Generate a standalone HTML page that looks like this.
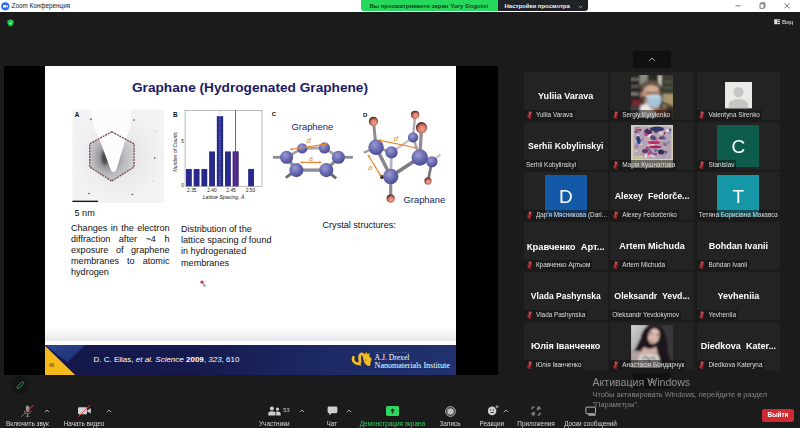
<!DOCTYPE html>
<html><head><meta charset="utf-8">
<style>
*{margin:0;padding:0;box-sizing:border-box}
html,body{width:800px;height:428px;overflow:hidden;background:#1b1b1b;font-family:"Liberation Sans",sans-serif;}
#all{position:absolute;left:0;top:0;width:800px;height:428px;overflow:hidden;filter:blur(.35px)}
.a{position:absolute}
.t{position:absolute;white-space:nowrap;line-height:1}
#titlebar{left:0;top:0;width:800px;height:12px;background:#fff}
#stage{left:4px;top:66px;width:493.5px;height:309px;background:#000}
#slide{left:44.5px;top:66px;width:411.5px;height:309px;background:#fff;overflow:hidden}
#pg{position:absolute;left:-44.5px;top:-66px;width:800px;height:428px}
.tile{position:absolute;width:83.5px;height:47.5px;background:#232323;overflow:hidden}
.big{position:absolute;left:-10px;right:-10px;text-align:center;color:#fff;font-weight:bold;font-size:9.05px;white-space:nowrap;line-height:1;top:19.8px}
.lab{position:absolute;left:0;bottom:0;height:9.3px;background:rgba(18,18,18,.55);color:#dedede;font-size:6.4px;line-height:9.6px;white-space:nowrap;padding:0 2px 0 2px}
.lab.m{padding-left:11.9px}
.mic{position:absolute;left:2.9px;top:.6px;width:5.6px;height:7.8px}
.tb{position:absolute;color:#d6d6d6;font-size:6.4px;white-space:nowrap;line-height:1;top:420.6px;transform:translateX(-50%)}
svg text{font-family:"Liberation Sans",sans-serif}
</style></head><body><div id="all">
<div class="a" id="titlebar">
<svg class="a" style="left:1px;top:2px" width="9" height="9" viewBox="0 0 9 9"><circle cx="4.3" cy="4.3" r="4.1" fill="#2d6df6"/><rect x="2" y="3.1" width="3.2" height="2.5" rx=".6" fill="#fff"/><path d="M5.4 4 L6.9 3.1 V5.6 L5.4 4.7Z" fill="#fff"/></svg>
<div class="t" style="left:11.5px;top:2.9px;font-size:6.35px;color:#222">Zoom Конференция</div>
<svg class="a" style="left:730px;top:0" width="70" height="12" viewBox="0 0 70 12"><path d="M5.5 5.8H10.5" stroke="#444" stroke-width=".7" fill="none"/><rect x="30" y="3.8" width="4" height="4.4" fill="none" stroke="#444" stroke-width=".7"/><path d="M31 3.8V2.8H35V7.2H34" fill="none" stroke="#444" stroke-width=".7"/><path d="M54.5 3.3L59.5 8.3M59.5 3.3L54.5 8.3" stroke="#333" stroke-width=".7" fill="none"/></svg>
</div>
<div class="a" style="left:361px;top:0;width:137px;height:11px;background:#24d95b;border-radius:0 0 0 3px"></div>
<div class="t" style="left:369.5px;top:3.2px;font-size:6.05px;font-weight:bold;color:#14401f">Вы просматриваете экран Yury Gogotsi</div>
<div class="a" style="left:497.5px;top:0;width:90.5px;height:11px;background:#1f2226;border-radius:0 0 3px 0"></div>
<div class="t" style="left:504.5px;top:3.2px;font-size:6px;font-weight:bold;color:#f2f2f2">Настройки просмотра</div>
<svg class="a" style="left:577.5px;top:4.5px" width="5" height="4" viewBox="0 0 5 4"><path d="M.8 1L2.5 2.7 4.2 1" stroke="#ddd" stroke-width=".7" fill="none"/></svg>
<svg class="a" style="left:7px;top:18.7px" width="7" height="7.9" viewBox="0 0 8 9"><path d="M4 .3L7.5 1.6V4.5C7.5 6.6 5.8 8 4 8.7 2.2 8 .5 6.6 .5 4.5V1.6Z" fill="#27c24c"/><path d="M2.4 4.4L3.6 5.6 5.7 3.2" stroke="#fff" stroke-width=".9" fill="none"/></svg>
<svg class="a" style="left:774px;top:19px" width="6.6" height="5.6" viewBox="0 0 7 6"><rect x=".2" y=".2" width="3.6" height="5.4" fill="#ddd"/><rect x="4.4" y=".2" width="2" height="1.3" fill="#ddd"/><rect x="4.4" y="2.2" width="2" height="1.3" fill="#ddd"/><rect x="4.4" y="4.3" width="2" height="1.3" fill="#ddd"/></svg>
<div class="t" style="left:782px;top:18.8px;font-size:6.2px;color:#e6e6e6">Вид</div>
<div class="a" style="left:633px;top:51px;width:38px;height:17px;background:#101010;border-radius:1.5px"></div>
<svg class="a" style="left:648px;top:57px" width="8" height="5" viewBox="0 0 8 5"><path d="M.8 4L4 1 7.2 4" stroke="#bbb" stroke-width=".9" fill="none"/></svg>
<div class="a" id="stage"></div>
<div class="a" id="slide"><div id="pg">
<div class="a" style="left:44.5px;top:328px;width:412px;height:17px;background:linear-gradient(#fff,#e9e9ec 75%,#fff 80%)"></div>
<div class="a" style="left:44.5px;top:345px;width:412px;height:30px;background:linear-gradient(90deg,#15184b,#15194d 35%,#1c2862 65%,#21326f)"></div>
<svg class="a" style="left:44.5px;top:345px" width="60" height="30" viewBox="0 0 60 30"><defs><linearGradient id="fg" x1="0" y1="0" x2="1" y2="1"><stop offset="0" stop-color="#2c4790"/><stop offset="1" stop-color="#1d2c6a"/></linearGradient></defs><path d="M0 0H40L22.5 17.5Z" fill="url(#fg)"/><path d="M0 .8L30.2 30H0Z" fill="#f6b91c"/></svg>
<div class="t" style="left:49px;top:363.6px;font-size:4.7px;color:#3a3020">46</div>
<div class="t" style="left:93.5px;top:355.7px;font-size:8px;color:#fff">D. C. Elias, <i>et al. Science</i> <b>2009</b>, <i>323</i>, 610</div>
<div class="t" style="left:44px;width:412px;text-align:center;top:81.2px;font-size:13.66px;font-weight:bold;color:#1a1a66">Graphane (Hydrogenated Graphene)</div>
<svg class="a" style="left:0;top:0" width="800" height="428" viewBox="0 0 800 428">
<defs><radialGradient id="gA" cx="42%" cy="52%" r="58%"><stop offset="0" stop-color="#4a4a50"/><stop offset=".3" stop-color="#909096"/><stop offset=".6" stop-color="#b8b8bd"/><stop offset="1" stop-color="#d2d2d6"/></radialGradient><radialGradient id="gA2" cx="50%" cy="50%" r="50%"><stop offset="0" stop-color="#e2e2e5"/><stop offset="1" stop-color="#f3f3f5"/></radialGradient><filter id="b1" x="-20%" y="-20%" width="140%" height="140%"><feGaussianBlur stdDeviation="1.2"/></filter><filter id="b05" x="-20%" y="-20%" width="140%" height="140%"><feGaussianBlur stdDeviation="0.5"/></filter></defs>
<rect x="72.43" y="109.66" width="91.77" height="93.32" fill="url(#gA2)"/>
<polygon points="111.76,131.76 134.12,143.85 134.12,166.98 111.76,181.12 89.65,166.98 89.65,143.85" fill="url(#gA)"/>
<ellipse cx="104.56" cy="157.98" rx="3" ry="7" fill="#3a3a40" opacity=".7" filter="url(#b1)"/>
<path d="M90.42 109.66 L131.55 109.66 L130.27 127.14 L124.61 142.56 L116.39 169.81 Q113.56 174.44 110.73 169.81 L100.7 142.56 L93.76 127.14 Z" fill="#fcfcfd" filter="url(#b05)"/>
<polygon points="111.76,131.76 134.12,143.85 134.12,166.98 111.76,181.12 89.65,166.98 89.65,143.85" fill="none" stroke="#7c444c" stroke-width="1.3" stroke-dasharray="2 .9"/>
<circle cx="90.94" cy="119.42" r=".8" fill="#444"/>
<circle cx="134.12" cy="119.94" r=".8" fill="#444"/>
<circle cx="154.69" cy="157.98" r=".8" fill="#444"/>
<circle cx="89.14" cy="193.46" r=".8" fill="#444"/>
<circle cx="132.32" cy="194.49" r=".8" fill="#444"/>
<circle cx="155.46" cy="130.99" r=".8" fill="#ccc"/>
<circle cx="153.4" cy="181.12" r=".8" fill="#ccc"/>
<rect x="72.43" y="200.66" width="25.71" height="1.3" fill="#111"/>
<text x="74.87" y="116.72" font-size="6.3" font-weight="bold" fill="#111">A</text>
<rect x="185.06" y="110.31" width="76.87" height="75.93" fill="#fff" stroke="#777" stroke-width=".5"/>
<rect x="185.99" y="168.95" width="5.84" height="17.29" fill="#27298c"/>
<rect x="193.7" y="168.95" width="5.84" height="17.29" fill="#27298c"/>
<rect x="201.41" y="168.95" width="5.84" height="17.29" fill="#27298c"/>
<rect x="209.12" y="151.43" width="5.84" height="34.81" fill="#27298c"/>
<rect x="216.83" y="116.15" width="6.31" height="70.09" fill="#27298c"/>
<rect x="225.01" y="151.43" width="5.84" height="34.81" fill="#27298c"/>
<rect x="232.72" y="151.43" width="5.84" height="34.81" fill="#27298c"/>
<rect x="248.14" y="168.95" width="5.84" height="17.29" fill="#27298c"/>
<path d="M219.87 111.01V186.24" stroke="#7fb2e8" stroke-width=".7" stroke-dasharray="1.5 1"/>
<path d="M235.52 110.31V186.24" stroke="#a8343c" stroke-width=".9"/>
<rect x="232.72" y="151.43" width="5.84" height="34.81" fill="#6a2a80" opacity=".55"/>
<text x="191.83" y="192.08" font-size="4.9" text-anchor="middle" fill="#222">2.35</text>
<text x="211.93" y="192.08" font-size="4.9" text-anchor="middle" fill="#222">2.40</text>
<text x="231.08" y="192.08" font-size="4.9" text-anchor="middle" fill="#222">2.45</text>
<text x="250.48" y="192.08" font-size="4.9" text-anchor="middle" fill="#222">2.50</text>
<text x="182.49" y="143.25" font-size="4.6" text-anchor="middle" fill="#222">5</text>
<text x="182.49" y="187.41" font-size="4.6" text-anchor="middle" fill="#222">0</text>
<text x="223.61" y="199.09" font-size="5.2" font-style="italic" text-anchor="middle" fill="#222">Lattice Spacing, Å</text>
<text transform="translate(177.11 151.9) rotate(-90)" font-size="4.9" font-style="italic" text-anchor="middle" fill="#222">Number of Counts</text>
<text x="172.91" y="116.85" font-size="6.3" font-weight="bold" fill="#111">B</text>
<defs><radialGradient id="sc" cx="40%" cy="35%" r="65%"><stop offset="0" stop-color="#9c9cd2"/><stop offset=".55" stop-color="#6c6cb4"/><stop offset="1" stop-color="#4c4c92"/></radialGradient><radialGradient id="sh" cx="56%" cy="62%" r="62%"><stop offset="0" stop-color="#f2a48e"/><stop offset=".5" stop-color="#d97c6a"/><stop offset="1" stop-color="#3a1c1a"/></radialGradient></defs>
<path d="M273.01 157.27L286.56 157.27" stroke="#8c8c92" stroke-width="2.8" stroke-linecap="butt"/>
<path d="M338.43 157.27L352.92 157.27" stroke="#8c8c92" stroke-width="2.8" stroke-linecap="butt"/>
<path d="M296.37 170.12L285.86 177.6" stroke="#6c6c72" stroke-width="3" stroke-linecap="butt"/>
<path d="M326.28 170.12L336.09 178.3" stroke="#6c6c72" stroke-width="3" stroke-linecap="butt"/>
<path d="M286.56 157.27L302.21 148.39" stroke="#a2a2aa" stroke-width="2.8" stroke-linecap="butt"/>
<path d="M302.21 148.39L324.41 147.93" stroke="#a2a2aa" stroke-width="2.8" stroke-linecap="butt"/>
<path d="M324.41 147.93L338.43 157.27" stroke="#a2a2aa" stroke-width="2.8" stroke-linecap="butt"/>
<circle cx="302.21" cy="148.39" r="5.14" fill="url(#sc)"/>
<circle cx="324.41" cy="147.93" r="5.61" fill="url(#sc)"/>
<path d="M338.43 157.27L326.28 170.12" stroke="#8c8c94" stroke-width="3.3" stroke-linecap="butt"/>
<path d="M326.28 170.12L296.37 170.12" stroke="#8c8c94" stroke-width="3.3" stroke-linecap="butt"/>
<path d="M296.37 170.12L286.56 157.27" stroke="#8c8c94" stroke-width="3.3" stroke-linecap="butt"/>
<circle cx="286.56" cy="157.27" r="6.54" fill="url(#sc)"/>
<circle cx="338.43" cy="157.27" r="6.54" fill="url(#sc)"/>
<circle cx="326.28" cy="170.12" r="7.01" fill="url(#sc)"/>
<circle cx="296.37" cy="170.12" r="7.01" fill="url(#sc)"/>
<path d="M291.58 149.23L325.7 144.06" stroke="#e8872e" stroke-width="1.2"/><polygon points="289.36,149.56 292.74,150.51 292.31,147.66" fill="#e8872e"/><polygon points="327.92,143.72 324.97,145.62 324.54,142.78" fill="#e8872e"/>
<path d="M302.12 162.41L319.83 162.41" stroke="#e8872e" stroke-width="1.2"/><polygon points="299.88,162.41 303.08,163.85 303.08,160.97" fill="#e8872e"/><polygon points="322.07,162.41 318.87,163.85 318.87,160.97" fill="#e8872e"/>
<text x="308.52" y="143.25" font-size="7.6" font-style="italic" fill="#e8872e" text-anchor="middle">d</text>
<text x="310.86" y="161.01" font-size="7.6" font-style="italic" fill="#e8872e" text-anchor="middle">a</text>
<text x="271.84" y="116.15" font-size="6" font-weight="bold" fill="#111">C</text>
<path d="M415.13 114.8L413.07 137.42" stroke="#b0b0b6" stroke-width="2.5" stroke-linecap="butt"/>
<path d="M391.48 152.33L413.07 137.42" stroke="#c4c4ca" stroke-width="2.5" stroke-linecap="butt"/>
<path d="M413.07 137.42L419.75 157.47" stroke="#a4a4aa" stroke-width="2.5" stroke-linecap="butt"/>
<circle cx="415.13" cy="114.8" r="4.11" fill="url(#sh)"/>
<circle cx="413.07" cy="137.42" r="5.14" fill="url(#sc)"/>
<path d="M363.71 152.84L376.05 147.19" stroke="#9a9aa0" stroke-width="2.2" stroke-linecap="butt"/>
<path d="M431.84 161.84L440.32 154.39" stroke="#c8c8cc" stroke-width="2.6" stroke-linecap="butt"/>
<path d="M373.48 121.48L376.05 147.19" stroke="#8c8c92" stroke-width="3" stroke-linecap="butt"/>
<path d="M421.55 127.65L419.75 157.47" stroke="#8c8c92" stroke-width="3.25" stroke-linecap="butt"/>
<path d="M376.05 147.19L391.48 152.33" stroke="#a0a0a6" stroke-width="2.75" stroke-linecap="butt"/>
<path d="M391.48 152.33L390.7 176.49" stroke="#b4b4ba" stroke-width="2.75" stroke-linecap="butt"/>
<path d="M376.05 147.19L390.7 176.49" stroke="#85858b" stroke-width="3.5" stroke-linecap="butt"/>
<path d="M390.7 176.49L419.75 157.47" stroke="#7c7c82" stroke-width="3.75" stroke-linecap="butt"/>
<path d="M390.7 176.49L390.7 198.6" stroke="#8c8c92" stroke-width="3.25" stroke-linecap="butt"/>
<path d="M419.75 157.47L431.84 161.84" stroke="#8c8c92" stroke-width="3" stroke-linecap="butt"/>
<path d="M431.84 161.84L427.98 181.12" stroke="#77777c" stroke-width="2.75" stroke-linecap="butt"/>
<circle cx="381.96" cy="177.01" r="1.9" fill="#2a2426"/>
<circle cx="391.48" cy="152.33" r="6.17" fill="url(#sc)"/>
<circle cx="376.05" cy="147.19" r="7.71" fill="url(#sc)"/>
<circle cx="431.84" cy="161.84" r="5.66" fill="url(#sc)"/>
<circle cx="419.75" cy="157.47" r="8.23" fill="url(#sc)"/>
<circle cx="390.7" cy="176.49" r="7.71" fill="url(#sc)"/>
<circle cx="373.48" cy="121.48" r="4.63" fill="url(#sh)"/>
<circle cx="421.55" cy="127.65" r="5.66" fill="url(#sh)"/>
<circle cx="427.98" cy="181.12" r="3.6" fill="url(#sh)"/>
<circle cx="390.7" cy="198.6" r="4.11" fill="url(#sh)"/>
<path d="M380.04 140.44L415.5 147.76" stroke="#e8872e" stroke-width="1.2"/><polygon points="377.85,139.99 380.69,142.05 381.28,139.23" fill="#e8872e"/><polygon points="417.7,148.22 414.27,148.98 414.85,146.16" fill="#e8872e"/>
<path d="M368.74 156.04L380.54 175.35" stroke="#e8872e" stroke-width="1.2"/><polygon points="367.57,154.13 368.01,157.61 370.47,156.11" fill="#e8872e"/><polygon points="381.71,177.26 378.81,175.29 381.27,173.78" fill="#e8872e"/>
<text x="395.85" y="140.5" font-size="7.6" font-style="italic" fill="#e8872e" text-anchor="middle">d</text>
<text x="370.14" y="169.55" font-size="7.6" font-style="italic" fill="#e8872e" text-anchor="middle">a</text>
<text x="362.94" y="116.6" font-size="6.1" font-weight="bold" fill="#111">D</text>
</svg>
<div class="t" style="left:74.5px;top:209.1px;font-size:9.1px;color:#111">5 nm</div>
<div class="a" style="left:71px;top:222.9px;width:98.5px;font-size:9.1px;line-height:11.1px;color:#111;text-align:justify">Changes in the electron diffraction after ~4 h exposure of graphene membranes to atomic hydrogen</div>
<div class="a" style="left:181px;top:224.3px;width:120px;font-size:9.1px;line-height:11.1px;color:#111">Distribution of the<br>lattice spacing <i>d</i> found<br>in hydrogenated<br>membranes</div>
<div class="t" style="left:322.5px;top:220.5px;font-size:9.1px;color:#111">Crystal structures:</div>
<div class="t" style="left:291.5px;top:122px;font-size:9.4px;color:#1a1a66">Graphene</div>
<div class="t" style="left:403.5px;top:195px;font-size:9.4px;color:#1a1a66">Graphane</div>
<svg class="a" style="left:0;top:0" width="800" height="428" viewBox="0 0 800 428">
<path d="M353.41 357.23 C352.07 360.27 354.5 364.21 358.45 363.61 C362.39 363 357.23 356.93 360.88 354.2 C364.21 352.38 364.21 358.14 365.13 360.57 C365.73 362.7 366.95 364.21 369.07 364.52" fill="none" stroke="#f3bb24" stroke-width="2.8" stroke-linecap="round"/>
<path d="M364.21 355.11 L366.95 351.77 L367.25 354.2 L369.98 352.98 L369.07 356.02 L371.8 359.05 L370.59 361.79 L370.29 364.21 L366.04 363 Z" fill="#f3bb24"/>
<circle cx="365.73" cy="360.09" r=".55" fill="#5a4410"/>
<path d="M356.93 364.21 L361.18 365.13" stroke="#f3bb24" stroke-width="1.2"/>
</svg>
<div class="t" style="left:374.8px;top:350.9px;font-size:2.9px;letter-spacing:.5px;color:#8f99c4;font-family:'Liberation Serif',serif">DREXEL UNIVERSITY</div>
<div class="t" style="left:374.6px;top:354.2px;font-size:7.6px;color:#fff;font-family:'Liberation Serif',serif">A.J. Drexel</div>
<div class="t" style="left:374.6px;top:361.9px;font-size:8.04px;color:#fff;font-family:'Liberation Serif',serif">Nanomaterials Institute</div>
<svg class="a" style="left:197px;top:277px" width="12" height="12" viewBox="0 0 12 12"><defs><filter id="cb"><feGaussianBlur stdDeviation=".5"/></filter></defs><circle cx="5" cy="5.1" r="1.7" fill="#c23458" filter="url(#cb)"/><path d="M6.1 6.6L8.6 8.4 7.6 8.7 7.2 9.8Z" fill="#fff" stroke="#444" stroke-width=".5"/></svg>
</div></div>
<div class="tile" style="left:524px;top:72px">
<div class="big">Yuliia Varava</div>
<div class="lab m"><svg class="mic" viewBox="0 0 5 7"><rect x="1.6" y=".3" width="1.8" height="3.6" rx=".9" fill="#e2454a"/><path d="M.8 3.2C.8 5.6 4.2 5.6 4.2 3.2M2.5 5V6.4M1.4 6.5H3.6" stroke="#e2454a" stroke-width=".6" fill="none"/><path d="M.3 6.3L4.7 .6" stroke="#e2454a" stroke-width=".8"/></svg>Yuliia Varava</div>
</div>
<div class="tile" style="left:610.3px;top:72px">
<svg class="a" style="left:20.7px;top:2.6px" width="42" height="43" viewBox="0 0 42 43"><defs><filter id="pb" x="-10%" y="-10%" width="120%" height="120%"><feGaussianBlur stdDeviation="0.8"/></filter><clipPath id="pc1"><rect width="42" height="43"/></clipPath></defs><g clip-path="url(#pc1)"><rect width="42" height="43" fill="#37322c"/><g filter="url(#pb)"><rect x="-2" y="-2" width="11" height="47" fill="#2b2723"/><rect x="-1" y="3.3" width="9" height="2" fill="#7d7a73"/><rect x="-1" y="10.5" width="9" height="1.8" fill="#6d6963"/><rect x="-1" y="17.6" width="8" height="2.4" fill="#8d887f"/><rect x="8.7" y="-2" width="8.5" height="12" fill="#8a8d82"/><rect x="16.6" y="-2" width="11" height="9" fill="#2a2a24"/><rect x="27.4" y="0" width="3.2" height="12" fill="#e2dac8"/><rect x="30.6" y="-2" width="13" height="21" fill="#3b3d31"/><rect x="33" y="6" width="9" height="1.5" fill="#5e6050"/><rect x="33" y="12" width="9" height="1.5" fill="#5e6050"/><rect x="31.5" y="18.8" width="12" height="13.5" fill="#a8966c"/><path d="M31 26L42 31V34L31 29Z" fill="#4a4030"/><rect x="28" y="32" width="16" height="12" fill="#3a3028"/><rect x="1" y="25.3" width="9" height="5" fill="#7c2831"/><rect x="-2" y="31" width="13" height="14" fill="#45413c"/><ellipse cx="19.7" cy="11.4" rx="10" ry="6.2" fill="#62554a"/><ellipse cx="20.3" cy="17.6" rx="8.6" ry="7.6" fill="#c69b83"/><ellipse cx="21" cy="13.6" rx="6.4" ry="2.8" fill="#d4ac94"/><ellipse cx="10.8" cy="19.6" rx="1.5" ry="2.8" fill="#b98b74"/><rect x="14.5" y="17.3" width="13.5" height="1.6" rx=".8" fill="#84604f"/><path d="M12 24L15 32L22 36L28 34L30 27Z" fill="#b58a76"/><path d="M15.6 21.4Q23 18.6 30.2 20.6Q31.4 26 28.8 30.4Q24 34 19.4 31.2Q15.8 27 15.6 21.4Z" fill="#a3c6da"/><path d="M16.2 21.6Q23 19.2 29.8 21L29.6 23Q23 21.4 16.4 23.6Z" fill="#cbdfea"/><path d="M7.6 44L9.6 30.4Q13 28 16.4 28.6L19.6 33.6L24 36.4V44Z" fill="#ebe7e3"/><path d="M24 36.5Q29 31.6 35 33L37 44H24Z" fill="#8a4a34"/></g></g></svg>
<div class="lab m"><svg class="mic" viewBox="0 0 5 7"><rect x="1.6" y=".3" width="1.8" height="3.6" rx=".9" fill="#e2454a"/><path d="M.8 3.2C.8 5.6 4.2 5.6 4.2 3.2M2.5 5V6.4M1.4 6.5H3.6" stroke="#e2454a" stroke-width=".6" fill="none"/><path d="M.3 6.3L4.7 .6" stroke="#e2454a" stroke-width=".8"/></svg>Sergiy Kyrylenko</div>
</div>
<div class="tile" style="left:696.6px;top:72px">
<svg class="a" style="left:28.2px;top:10.4px" width="27" height="26.3" viewBox="0 0 27 26.3"><rect width="27" height="26.3" fill="#e9e9e6"/><circle cx="13.5" cy="10.2" r="5" fill="#c6c6c2"/><path d="M3.8 26.3V23.5Q3.8 17 13.5 17Q23.2 17 23.2 23.5V26.3Z" fill="#c6c6c2"/></svg>
<div class="lab m"><svg class="mic" viewBox="0 0 5 7"><rect x="1.6" y=".3" width="1.8" height="3.6" rx=".9" fill="#e2454a"/><path d="M.8 3.2C.8 5.6 4.2 5.6 4.2 3.2M2.5 5V6.4M1.4 6.5H3.6" stroke="#e2454a" stroke-width=".6" fill="none"/><path d="M.3 6.3L4.7 .6" stroke="#e2454a" stroke-width=".8"/></svg>Valentyna Sirenko</div>
</div>
<div class="tile" style="left:524px;top:122px">
<div class="big" style="font-size:8.7px">Serhii Kobylinskyi</div>
<div class="lab">Serhii Kobylinskyi</div>
</div>
<div class="tile" style="left:610.3px;top:122px">
<svg class="a" style="left:20.7px;top:2.6px" width="42" height="43" viewBox="0 0 42 43"><defs><filter id="pb2" x="-10%" y="-10%" width="120%" height="120%"><feGaussianBlur stdDeviation="0.55"/></filter><clipPath id="pc2"><rect width="42" height="43"/></clipPath></defs><g clip-path="url(#pc2)"><rect width="42" height="43" fill="#d4d0bc"/><g filter="url(#pb2)"><rect x="2.5" y="1.5" width="38" height="32.5" fill="#b4a6b2"/><ellipse cx="20.7" cy="18.9" rx="3.1" ry="1.5" transform="rotate(25 20.7 18.9)" fill="#e4d8d4"/><ellipse cx="11.1" cy="18.0" rx="2.4" ry="1.9" transform="rotate(-28 11.1 18.0)" fill="#c4b8c0"/><ellipse cx="15.5" cy="5.9" rx="2.8" ry="1.8" transform="rotate(-35 15.5 5.9)" fill="#3a3a5a"/><ellipse cx="37.2" cy="21.2" rx="2.4" ry="1.0" transform="rotate(-39 37.2 21.2)" fill="#b0a4b4"/><ellipse cx="7.6" cy="4.2" rx="3.0" ry="1.7" transform="rotate(19 7.6 4.2)" fill="#5a4a78"/><ellipse cx="19.4" cy="27.2" rx="2.2" ry="1.7" transform="rotate(23 19.4 27.2)" fill="#b84a7e"/><ellipse cx="26.3" cy="16.8" rx="1.6" ry="2.2" transform="rotate(-30 26.3 16.8)" fill="#8a94c0"/><ellipse cx="14.7" cy="8.9" rx="1.7" ry="0.9" transform="rotate(-27 14.7 8.9)" fill="#3a3a5a"/><ellipse cx="7.3" cy="10.6" rx="1.2" ry="0.8" transform="rotate(-40 7.3 10.6)" fill="#e4d8d4"/><ellipse cx="11.6" cy="29.7" rx="2.1" ry="2.2" transform="rotate(10 11.6 29.7)" fill="#a89aac"/><ellipse cx="7.7" cy="20.6" rx="2.8" ry="1.2" transform="rotate(-29 7.7 20.6)" fill="#c8a8b4"/><ellipse cx="16.3" cy="29.9" rx="2.7" ry="1.0" transform="rotate(-9 16.3 29.9)" fill="#d8ccc4"/><ellipse cx="5.0" cy="16.5" rx="2.1" ry="1.8" transform="rotate(-16 5.0 16.5)" fill="#c4b8c0"/><ellipse cx="22.3" cy="31.0" rx="2.7" ry="1.4" transform="rotate(9 22.3 31.0)" fill="#d8ccc4"/><ellipse cx="16.7" cy="31.8" rx="1.0" ry="2.1" transform="rotate(35 16.7 31.8)" fill="#c8a8b4"/><ellipse cx="37.4" cy="4.3" rx="1.4" ry="2.2" transform="rotate(37 37.4 4.3)" fill="#d8ccc4"/><ellipse cx="5.9" cy="6.5" rx="2.0" ry="0.8" transform="rotate(38 5.9 6.5)" fill="#5a4a78"/><ellipse cx="31.5" cy="13.6" rx="1.2" ry="1.1" transform="rotate(-9 31.5 13.6)" fill="#b84a7e"/><ellipse cx="24.7" cy="14.3" rx="2.0" ry="2.2" transform="rotate(21 24.7 14.3)" fill="#b87a98"/><ellipse cx="32.9" cy="8.8" rx="1.3" ry="2.1" transform="rotate(38 32.9 8.8)" fill="#9a3860"/><ellipse cx="29.2" cy="7.6" rx="2.4" ry="1.6" transform="rotate(9 29.2 7.6)" fill="#d8c8cc"/><ellipse cx="24.0" cy="14.4" rx="1.2" ry="0.9" transform="rotate(-8 24.0 14.4)" fill="#9a3860"/><ellipse cx="29.2" cy="14.8" rx="1.9" ry="2.1" transform="rotate(22 29.2 14.8)" fill="#c8a8b4"/><ellipse cx="23.1" cy="29.0" rx="3.2" ry="1.0" transform="rotate(21 23.1 29.0)" fill="#5a68a8"/><ellipse cx="13.3" cy="28.5" rx="1.5" ry="0.8" transform="rotate(-6 13.3 28.5)" fill="#a89aac"/><ellipse cx="18.8" cy="4.6" rx="1.4" ry="1.3" transform="rotate(33 18.8 4.6)" fill="#b87a98"/><ellipse cx="7.6" cy="6.7" rx="2.0" ry="1.3" transform="rotate(26 7.6 6.7)" fill="#b87a98"/><ellipse cx="24.3" cy="29.1" rx="2.1" ry="1.3" transform="rotate(-1 24.3 29.1)" fill="#8a5a98"/><ellipse cx="5.3" cy="21.5" rx="2.1" ry="1.9" transform="rotate(0 5.3 21.5)" fill="#b87a98"/><ellipse cx="38.2" cy="5.5" rx="2.2" ry="1.9" transform="rotate(-24 38.2 5.5)" fill="#5a4a78"/><ellipse cx="17.3" cy="23.1" rx="3.0" ry="2.1" transform="rotate(13 17.3 23.1)" fill="#b84a7e"/><ellipse cx="33.8" cy="19.2" rx="2.4" ry="1.4" transform="rotate(34 33.8 19.2)" fill="#b84a7e"/><ellipse cx="25.3" cy="6.0" rx="2.4" ry="2.2" transform="rotate(13 25.3 6.0)" fill="#5a4a78"/><ellipse cx="17.8" cy="23.9" rx="2.3" ry="1.4" transform="rotate(29 17.8 23.9)" fill="#5a68a8"/><ellipse cx="21.6" cy="17.1" rx="1.7" ry="0.9" transform="rotate(-38 21.6 17.1)" fill="#9a3860"/><ellipse cx="37.3" cy="6.5" rx="2.8" ry="1.8" transform="rotate(22 37.3 6.5)" fill="#8a94c0"/><ellipse cx="33.9" cy="13.7" rx="1.3" ry="1.7" transform="rotate(26 33.9 13.7)" fill="#7a88b8"/><ellipse cx="30.8" cy="12.8" rx="3.1" ry="1.5" transform="rotate(-10 30.8 12.8)" fill="#5a4a78"/><ellipse cx="18.5" cy="10.6" rx="2.4" ry="2.0" transform="rotate(-15 18.5 10.6)" fill="#e4d8d4"/><ellipse cx="17.1" cy="19.1" rx="1.7" ry="1.0" transform="rotate(23 17.1 19.1)" fill="#d08aa8"/><ellipse cx="33.1" cy="27.9" rx="2.6" ry="2.2" transform="rotate(-5 33.1 27.9)" fill="#7a88b8"/><ellipse cx="9.4" cy="16.9" rx="3.1" ry="2.0" transform="rotate(8 9.4 16.9)" fill="#b0a4b4"/><ellipse cx="21.9" cy="12.7" rx="2.9" ry="2.2" transform="rotate(17 21.9 12.7)" fill="#5a4a78"/><ellipse cx="8.0" cy="3.3" rx="3.0" ry="0.9" transform="rotate(-5 8.0 3.3)" fill="#d08aa8"/><ellipse cx="13.9" cy="25.1" rx="1.0" ry="1.0" transform="rotate(18 13.9 25.1)" fill="#e4d8d4"/><ellipse cx="4.9" cy="26.1" rx="1.5" ry="1.0" transform="rotate(-34 4.9 26.1)" fill="#d8ccc4"/><ellipse cx="19.9" cy="21.4" rx="2.5" ry="2.0" transform="rotate(-31 19.9 21.4)" fill="#e4d8d4"/><ellipse cx="10.6" cy="15.9" rx="1.4" ry="0.8" transform="rotate(20 10.6 15.9)" fill="#8a5a98"/><ellipse cx="10.3" cy="11.1" rx="1.8" ry="1.8" transform="rotate(26 10.3 11.1)" fill="#b0a4b4"/><ellipse cx="25.0" cy="25.0" rx="1.9" ry="1.9" transform="rotate(-12 25.0 25.0)" fill="#5a68a8"/><ellipse cx="18.1" cy="28.4" rx="1.9" ry="1.5" transform="rotate(-15 18.1 28.4)" fill="#b84a7e"/><ellipse cx="18.1" cy="19.7" rx="3.0" ry="2.0" transform="rotate(3 18.1 19.7)" fill="#c4b8c0"/><ellipse cx="14.7" cy="31.6" rx="1.2" ry="2.1" transform="rotate(-25 14.7 31.6)" fill="#e4d8d4"/><ellipse cx="11.8" cy="13.9" rx="1.2" ry="1.2" transform="rotate(1 11.8 13.9)" fill="#8a94c0"/><ellipse cx="34.8" cy="26.8" rx="1.8" ry="0.9" transform="rotate(16 34.8 26.8)" fill="#5a4a78"/><ellipse cx="23.0" cy="24.2" rx="2.1" ry="0.8" transform="rotate(-32 23.0 24.2)" fill="#a89aac"/><ellipse cx="31.0" cy="8.4" rx="1.8" ry="1.9" transform="rotate(-23 31.0 8.4)" fill="#d8c8cc"/><ellipse cx="10.1" cy="18.2" rx="2.6" ry="2.0" transform="rotate(16 10.1 18.2)" fill="#d8c8cc"/><ellipse cx="24.6" cy="22.6" rx="2.7" ry="1.4" transform="rotate(31 24.6 22.6)" fill="#c8a8b4"/><ellipse cx="31.7" cy="19.0" rx="1.4" ry="1.5" transform="rotate(31 31.7 19.0)" fill="#8a94c0"/><ellipse cx="15.8" cy="14.5" rx="2.9" ry="2.1" transform="rotate(-14 15.8 14.5)" fill="#c8a8b4"/><ellipse cx="33.2" cy="30.7" rx="2.2" ry="1.6" transform="rotate(-15 33.2 30.7)" fill="#a89aac"/><ellipse cx="22.8" cy="16.7" rx="2.4" ry="0.8" transform="rotate(-35 22.8 16.7)" fill="#b0a4b4"/><ellipse cx="36.5" cy="18.0" rx="3.2" ry="1.0" transform="rotate(-29 36.5 18.0)" fill="#7a88b8"/><ellipse cx="6.6" cy="19.0" rx="1.9" ry="2.2" transform="rotate(11 6.6 19.0)" fill="#8a94c0"/><ellipse cx="12.5" cy="17.7" rx="1.8" ry="2.1" transform="rotate(20 12.5 17.7)" fill="#b0a4b4"/><ellipse cx="15.5" cy="9.1" rx="2.4" ry="2.1" transform="rotate(-24 15.5 9.1)" fill="#b84a7e"/><ellipse cx="4.7" cy="7.1" rx="1.0" ry="1.2" transform="rotate(5 4.7 7.1)" fill="#9a3860"/><ellipse cx="25.9" cy="5.5" rx="2.6" ry="1.0" transform="rotate(25 25.9 5.5)" fill="#8a94c0"/><ellipse cx="29.5" cy="22.3" rx="3.0" ry="0.8" transform="rotate(12 29.5 22.3)" fill="#b0a4b4"/><ellipse cx="23" cy="17.6" rx="6.5" ry="1.5" fill="#c02868"/><ellipse cx="24" cy="22" rx="6.5" ry="1.4" fill="#a82460"/><ellipse cx="26" cy="4" rx="7" ry="2.4" fill="#34346e"/><ellipse cx="18" cy="7" rx="3" ry="2" fill="#4a2a5a"/><ellipse cx="7.5" cy="15" rx="2" ry="4" transform="rotate(-15 7.5 15)" fill="#2e3c7c"/><ellipse cx="30" cy="27" rx="3" ry="2.5" fill="#3a2a4a"/><ellipse cx="14" cy="26" rx="3" ry="2" fill="#5a3a6a"/><circle cx="36.5" cy="5.5" r="1.5" fill="#f4f0e8"/><rect x="2.5" y="30.5" width="10" height="3.5" fill="#c8c4a0"/></g></g></svg>
<div class="lab m"><svg class="mic" viewBox="0 0 5 7"><rect x="1.6" y=".3" width="1.8" height="3.6" rx=".9" fill="#e2454a"/><path d="M.8 3.2C.8 5.6 4.2 5.6 4.2 3.2M2.5 5V6.4M1.4 6.5H3.6" stroke="#e2454a" stroke-width=".6" fill="none"/><path d="M.3 6.3L4.7 .6" stroke="#e2454a" stroke-width=".8"/></svg>Марія Кушнаітова</div>
</div>
<div class="tile" style="left:696.6px;top:122px">
<div class="a" style="left:20.8px;top:2.7px;width:42px;height:42px;background:#0e5d4c"></div><div class="t" style="left:20.8px;width:42px;text-align:center;top:14.5px;font-size:19px;color:#fff">C</div>
<div class="lab m"><svg class="mic" viewBox="0 0 5 7"><rect x="1.6" y=".3" width="1.8" height="3.6" rx=".9" fill="#e2454a"/><path d="M.8 3.2C.8 5.6 4.2 5.6 4.2 3.2M2.5 5V6.4M1.4 6.5H3.6" stroke="#e2454a" stroke-width=".6" fill="none"/><path d="M.3 6.3L4.7 .6" stroke="#e2454a" stroke-width=".8"/></svg>Stanislav</div>
</div>
<div class="tile" style="left:524px;top:172px">
<div class="a" style="left:20.8px;top:2.7px;width:42px;height:42px;background:#1259a8"></div><div class="t" style="left:20.8px;width:42px;text-align:center;top:14.5px;font-size:19px;color:#fff">D</div>
<div class="lab m"><svg class="mic" viewBox="0 0 5 7"><rect x="1.6" y=".3" width="1.8" height="3.6" rx=".9" fill="#e2454a"/><path d="M.8 3.2C.8 5.6 4.2 5.6 4.2 3.2M2.5 5V6.4M1.4 6.5H3.6" stroke="#e2454a" stroke-width=".6" fill="none"/><path d="M.3 6.3L4.7 .6" stroke="#e2454a" stroke-width=".8"/></svg>Дар'я Мясникова (Dari...</div>
</div>
<div class="tile" style="left:610.3px;top:172px">
<div class="big" style="font-size:8.81px">Alexey&nbsp; Fedorče...</div>
<div class="lab m"><svg class="mic" viewBox="0 0 5 7"><rect x="1.6" y=".3" width="1.8" height="3.6" rx=".9" fill="#e2454a"/><path d="M.8 3.2C.8 5.6 4.2 5.6 4.2 3.2M2.5 5V6.4M1.4 6.5H3.6" stroke="#e2454a" stroke-width=".6" fill="none"/><path d="M.3 6.3L4.7 .6" stroke="#e2454a" stroke-width=".8"/></svg>Alexey Fedorčenko</div>
</div>
<div class="tile" style="left:696.6px;top:172px">
<div class="a" style="left:20.8px;top:2.7px;width:42px;height:42px;background:#1597a8"></div><div class="t" style="left:20.8px;width:42px;text-align:center;top:14.5px;font-size:19px;color:#fff">T</div>
<div class="lab">Тетяна Борисівна Макавоз</div>
</div>
<div class="tile" style="left:524px;top:222px">
<div class="big" style="font-size:9.39px">Кравченко&nbsp; Арт...</div>
<div class="lab m"><svg class="mic" viewBox="0 0 5 7"><rect x="1.6" y=".3" width="1.8" height="3.6" rx=".9" fill="#e2454a"/><path d="M.8 3.2C.8 5.6 4.2 5.6 4.2 3.2M2.5 5V6.4M1.4 6.5H3.6" stroke="#e2454a" stroke-width=".6" fill="none"/><path d="M.3 6.3L4.7 .6" stroke="#e2454a" stroke-width=".8"/></svg>Кравченко Артьом</div>
</div>
<div class="tile" style="left:610.3px;top:222px">
<div class="big">Artem Michuda</div>
<div class="lab m"><svg class="mic" viewBox="0 0 5 7"><rect x="1.6" y=".3" width="1.8" height="3.6" rx=".9" fill="#e2454a"/><path d="M.8 3.2C.8 5.6 4.2 5.6 4.2 3.2M2.5 5V6.4M1.4 6.5H3.6" stroke="#e2454a" stroke-width=".6" fill="none"/><path d="M.3 6.3L4.7 .6" stroke="#e2454a" stroke-width=".8"/></svg>Artem Michuda</div>
</div>
<div class="tile" style="left:696.6px;top:222px">
<div class="big">Bohdan Ivanii</div>
<div class="lab m"><svg class="mic" viewBox="0 0 5 7"><rect x="1.6" y=".3" width="1.8" height="3.6" rx=".9" fill="#e2454a"/><path d="M.8 3.2C.8 5.6 4.2 5.6 4.2 3.2M2.5 5V6.4M1.4 6.5H3.6" stroke="#e2454a" stroke-width=".6" fill="none"/><path d="M.3 6.3L4.7 .6" stroke="#e2454a" stroke-width=".8"/></svg>Bohdan Ivanii</div>
</div>
<div class="tile" style="left:524px;top:272px">
<div class="big" style="font-size:8.56px">Vlada Pashynska</div>
<div class="lab m"><svg class="mic" viewBox="0 0 5 7"><rect x="1.6" y=".3" width="1.8" height="3.6" rx=".9" fill="#e2454a"/><path d="M.8 3.2C.8 5.6 4.2 5.6 4.2 3.2M2.5 5V6.4M1.4 6.5H3.6" stroke="#e2454a" stroke-width=".6" fill="none"/><path d="M.3 6.3L4.7 .6" stroke="#e2454a" stroke-width=".8"/></svg>Vlada Pashynska</div>
</div>
<div class="tile" style="left:610.3px;top:272px">
<div class="big" style="font-size:8.78px">Oleksandr&nbsp; Yevd...</div>
<div class="lab">Oleksandr Yevdokymov</div>
</div>
<div class="tile" style="left:696.6px;top:272px">
<div class="big">Yevheniia</div>
<div class="lab m"><svg class="mic" viewBox="0 0 5 7"><rect x="1.6" y=".3" width="1.8" height="3.6" rx=".9" fill="#e2454a"/><path d="M.8 3.2C.8 5.6 4.2 5.6 4.2 3.2M2.5 5V6.4M1.4 6.5H3.6" stroke="#e2454a" stroke-width=".6" fill="none"/><path d="M.3 6.3L4.7 .6" stroke="#e2454a" stroke-width=".8"/></svg>Yevheniia</div>
</div>
<div class="tile" style="left:524px;top:322px">
<div class="big">Юлія Іванченко</div>
<div class="lab m"><svg class="mic" viewBox="0 0 5 7"><rect x="1.6" y=".3" width="1.8" height="3.6" rx=".9" fill="#e2454a"/><path d="M.8 3.2C.8 5.6 4.2 5.6 4.2 3.2M2.5 5V6.4M1.4 6.5H3.6" stroke="#e2454a" stroke-width=".6" fill="none"/><path d="M.3 6.3L4.7 .6" stroke="#e2454a" stroke-width=".8"/></svg>Юлія Іванченко</div>
</div>
<div class="tile" style="left:610.3px;top:322px">
<svg class="a" style="left:20.7px;top:2.6px" width="42" height="43" viewBox="0 0 42 43"><defs><filter id="pb3" x="-10%" y="-10%" width="120%" height="120%"><feGaussianBlur stdDeviation="0.8"/></filter><clipPath id="pc3"><rect width="42" height="43"/></clipPath><linearGradient id="lg3" x1="0" y1="0" x2="1" y2="1"><stop offset="0" stop-color="#d4d4d4"/><stop offset="1" stop-color="#9c9a9c"/></linearGradient></defs><g clip-path="url(#pc3)"><rect width="42" height="43" fill="#333335"/><g filter="url(#pb3)"><path d="M-1 -1H17L6 24L-1 27Z" fill="url(#lg3)"/><rect x="33" y="-1" width="10" height="45" fill="#38383a"/><path d="M14.5 2.5Q23 -2.5 31.5 3.5Q37 12 36.5 24Q38 32 40 37L30 39L24 30L13 27L2 28Q6 21 9.5 13Q11 6 14.5 2.5Z" fill="#1b191c"/><path d="M-1 27Q5 24.5 10 27L12 44H-1Z" fill="#b4a2a4"/><path d="M13.5 22Q19 26 25 21.5L28 34H7Q9 25.5 13.5 22Z" fill="#cfada2"/><ellipse cx="22.8" cy="11.2" rx="5.6" ry="7.8" transform="rotate(16 22.8 11.2)" fill="#dbb6aa"/><ellipse cx="24" cy="6.5" rx="4" ry="2" transform="rotate(16 24 6.5)" fill="#e2c2b8"/><ellipse cx="20.3" cy="8.2" rx="1.5" ry=".7" transform="rotate(14 20.3 8.2)" fill="#3a2a2c"/><ellipse cx="26.3" cy="9.6" rx="1.5" ry=".7" transform="rotate(14 26.3 9.6)" fill="#3a2a2c"/><ellipse cx="20.6" cy="15.8" rx="1.7" ry=".8" transform="rotate(14 20.6 15.8)" fill="#b8686c"/><path d="M8 31Q18 27.5 28 31.5L30 44H7Z" fill="#dcd6d4"/><path d="M11 34L15 31.6L18 34.6L22 32.2L25 35M13 37.5L17 36L21 38L25 37" stroke="#3a3a3c" stroke-width="1.1" fill="none"/></g></g></svg>
<div class="lab m"><svg class="mic" viewBox="0 0 5 7"><rect x="1.6" y=".3" width="1.8" height="3.6" rx=".9" fill="#e2454a"/><path d="M.8 3.2C.8 5.6 4.2 5.6 4.2 3.2M2.5 5V6.4M1.4 6.5H3.6" stroke="#e2454a" stroke-width=".6" fill="none"/><path d="M.3 6.3L4.7 .6" stroke="#e2454a" stroke-width=".8"/></svg>Анастасія Бондарчук</div>
</div>
<div class="tile" style="left:696.6px;top:322px">
<div class="big">Diedkova&nbsp; Kater...</div>
<div class="lab m"><svg class="mic" viewBox="0 0 5 7"><rect x="1.6" y=".3" width="1.8" height="3.6" rx=".9" fill="#e2454a"/><path d="M.8 3.2C.8 5.6 4.2 5.6 4.2 3.2M2.5 5V6.4M1.4 6.5H3.6" stroke="#e2454a" stroke-width=".6" fill="none"/><path d="M.3 6.3L4.7 .6" stroke="#e2454a" stroke-width=".8"/></svg>Diedkova Kateryna</div>
</div>
<div class="a" style="left:11.4px;top:375.8px;width:18px;height:18px;border-radius:9px;background:#151515"></div>
<svg class="a" style="left:15.3px;top:379.7px" width="10.6" height="10.6" viewBox="0 0 12 12"><path d="M2.6 9.4L2.2 7.8 7.6 2.3Q8.5 1.5 9.4 2.4Q10.2 3.3 9.4 4.1L4 9.6Z" fill="none" stroke="#2fb55a" stroke-width=".9" stroke-linejoin="round"/></svg>
<svg class="a" style="left:20px;top:404px" width="15" height="14" viewBox="0 0 15 14"><rect x="5.9" y="1.5" width="3.4" height="6.8" rx="1.7" fill="#9c9494"/><path d="M4.4 6.8C4.4 10.8 10.8 10.8 10.8 6.8M7.6 10V12.2M5.8 12.3H9.4" stroke="#8e8888" stroke-width=".9" fill="none"/><path d="M1.2 12.6L13.6 1.2" stroke="#e2454a" stroke-width="1"/></svg>
<svg class="a" style="left:43.8px;top:408.6px" width="6" height="4" viewBox="0 0 6 4"><path d="M.8 3.2L3 1 5.2 3.2" stroke="#cfcfcf" stroke-width=".8" fill="none"/></svg>
<div class="tb" style="left:27.4px">Включить звук</div>
<svg class="a" style="left:76px;top:404px" width="17" height="14" viewBox="0 0 17 14"><rect x="2" y="3.2" width="9" height="7" rx="1.2" fill="#d0d0d0"/><path d="M11.4 6.2L14.8 3.9V9.6L11.4 7.4Z" fill="#d0d0d0"/><path d="M2.3 12.6L14.2 1.2" stroke="#e2454a" stroke-width="1"/></svg>
<svg class="a" style="left:105.5px;top:408.6px" width="6" height="4" viewBox="0 0 6 4"><path d="M.8 3.2L3 1 5.2 3.2" stroke="#cfcfcf" stroke-width=".8" fill="none"/></svg>
<div class="tb" style="left:84px">Начать видео</div>
<svg class="a" style="left:268px;top:406px" width="13" height="10" viewBox="0 0 13 10"><circle cx="3.9" cy="2.4" r="2" fill="#cfcfcf"/><path d="M.3 9.6V7.6Q.3 5.2 3.9 5.2Q7.5 5.2 7.5 7.6V9.6Z" fill="#cfcfcf"/><circle cx="9.5" cy="3.1" r="1.6" fill="#cfcfcf"/><path d="M8.2 9.6V7.6Q8.2 6.4 7.6 5.8Q8.4 5.4 9.5 5.4Q12.6 5.4 12.6 7.6V9.6Z" fill="#cfcfcf"/></svg>
<div class="t" style="left:283.3px;top:407.8px;font-size:5.6px;color:#d6d6d6">53</div>
<svg class="a" style="left:298.8px;top:409px" width="6" height="4" viewBox="0 0 6 4"><path d="M.8 3.2L3 1 5.2 3.2" stroke="#cfcfcf" stroke-width=".8" fill="none"/></svg>
<div class="tb" style="left:274.3px">Участники</div>
<svg class="a" style="left:326.5px;top:405.5px" width="11" height="10.5" viewBox="0 0 11 10.5"><path d="M2 .6H9Q10.4 .6 10.4 2V5.8Q10.4 7.2 9 7.2H4.6L2.4 9.6V7.2H2Q.6 7.2 .6 5.8V2Q.6 .6 2 .6Z" fill="#cfcfcf"/></svg>
<svg class="a" style="left:345.9px;top:409px" width="6" height="4" viewBox="0 0 6 4"><path d="M.8 3.2L3 1 5.2 3.2" stroke="#cfcfcf" stroke-width=".8" fill="none"/></svg>
<div class="tb" style="left:331.8px">Чат</div>
<svg class="a" style="left:385.8px;top:406px" width="13.2" height="10" viewBox="0 0 13.2 10"><rect width="13.2" height="10" rx="1.8" fill="#2ed760"/><path d="M6.6 2.2L4.2 4.9H5.8V7.6H7.4V4.9H9Z" fill="#143d20"/></svg>
<div class="tb" style="left:392.4px;color:#2bd45c">Демонстрация экрана</div>
<svg class="a" style="left:444.6px;top:405.5px" width="11" height="11" viewBox="0 0 11 11"><circle cx="5.5" cy="5.5" r="4.8" fill="none" stroke="#d8d8d8" stroke-width=".9"/><circle cx="5.5" cy="5.5" r="3.3" fill="#bdbdbd"/></svg>
<div class="tb" style="left:450px">Запись</div>
<svg class="a" style="left:486.5px;top:403.5px" width="13" height="12" viewBox="0 0 13 12"><circle cx="5.1" cy="6.9" r="4.3" fill="#cfcfcf"/><circle cx="3.6" cy="5.9" r=".6" fill="#222"/><circle cx="6.5" cy="5.9" r=".6" fill="#222"/><path d="M3 8Q5.1 10 7.2 8Z" fill="#222"/><circle cx="10" cy="2.8" r="2.2" fill="#1b1b1b"/><path d="M10 1.2V4.4M8.4 2.8H11.6" stroke="#cfcfcf" stroke-width=".8"/></svg>
<svg class="a" style="left:503px;top:408.8px" width="6" height="4" viewBox="0 0 6 4"><path d="M.8 3.2L3 1 5.2 3.2" stroke="#cfcfcf" stroke-width=".8" fill="none"/></svg>
<div class="tb" style="left:491.8px">Реакции</div>
<svg class="a" style="left:531px;top:406.3px" width="10" height="10" viewBox="0 0 10 10"><path d="M3.4 1H2Q1 1 1 2V3.4M6.6 1H8Q9 1 9 2V3.4M1 6.6V8Q1 9 2 9H3.4M9 6.6V8Q9 9 8 9H6.6" stroke="#cfcfcf" stroke-width=".85" fill="none"/><circle cx="7" cy="3" r=".9" fill="none" stroke="#cfcfcf" stroke-width=".6"/><circle cx="3" cy="7" r=".9" fill="none" stroke="#cfcfcf" stroke-width=".6"/></svg>
<div class="tb" style="left:536px">Приложения</div>
<svg class="a" style="left:585px;top:405.5px" width="12" height="10.5" viewBox="0 0 12 10.5"><rect x=".9" y="1.1" width="9.6" height="6.6" rx=".9" fill="none" stroke="#c4c4c4" stroke-width=".9"/><path d="M3.4 9H10.6" stroke="#d8d8d8" stroke-width="1.2"/></svg>
<div class="tb" style="left:590.5px">Доски сообщений</div>
<div class="a" style="left:761.7px;top:408.6px;width:32.6px;height:13.2px;border-radius:2.5px;background:#cf2a31"></div>
<div class="t" style="left:761.7px;width:32.6px;text-align:center;top:412px;font-size:6.3px;font-weight:bold;color:#fff">Выйти</div>
<div class="a" style="left:633px;top:372.6px;width:38px;height:16.6px;background:#111;border-radius:1.5px"></div>
<svg class="a" style="left:648px;top:378.5px" width="8" height="5" viewBox="0 0 8 5"><path d="M.8 1L4 4 7.2 1" stroke="#999" stroke-width=".9" fill="none"/></svg>
<div class="t" style="left:592.5px;top:376.8px;font-size:10.6px;color:#8e8e8e">Активация Windows</div>
<div class="t" style="left:592.5px;top:391.2px;font-size:7.4px;color:#858585">Чтобы активировать Windows, перейдите в раздел</div>
<div class="t" style="left:592.5px;top:401px;font-size:7.4px;color:#858585">"Параметры".</div>
</div></body></html>
